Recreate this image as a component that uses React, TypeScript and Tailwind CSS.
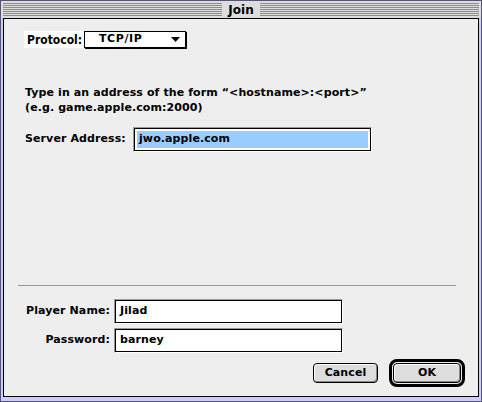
import React from 'react';

const font = "font-['DejaVu_Sans',Verdana,sans-serif]";
const txt = 'text-[11px] font-bold tracking-[0.1px] text-black';

function Stripes() {
  return (
    <div className="flex-1 flex flex-col gap-px">
      {[0, 1, 2, 3, 4, 5, 6].map((i) => (
        <div key={i} className="h-px bg-[#8c8c8c]" />
      ))}
    </div>
  );
}

function Field({ value, width, selected }: { value: string; width: string; selected?: boolean }) {
  return (
    <div className={`${width} border-t border-l border-[#999] border-b border-r border-b-white border-r-white`}>
      <div className="h-[23px] border border-black bg-white p-[2px] flex items-center">
        <div className={`h-[17px] w-full flex items-center pl-[2px] ${txt} ${selected ? 'bg-[#99ccff]' : ''}`}>
          {value}
        </div>
      </div>
    </div>
  );
}

function Button({ label, width }: { label: string; width: string }) {
  return (
    <div className={`${width} h-[20px] rounded-[4px] border border-black bg-[#dddddd] shadow-[inset_1px_1px_0_#fff,inset_-1px_-1px_0_#888] flex items-center justify-center ${txt}`}>
      {label}
    </div>
  );
}

export default function App() {
  return (
    <div className={`w-[482px] h-[402px] bg-[#ccccff] border border-[#555577] flex flex-col ${font}`}>
      {/* title bar */}
      <div className="h-[17px] flex items-center px-[2px] bg-[#dddddd]">
        <Stripes />
        <div className="px-[6px] text-[12px] font-bold text-black leading-none">Join</div>
        <Stripes />
      </div>

      <div className="flex-1 mx-[2px] mb-[4px] border border-black bg-[#eeeeee] flex flex-col">
        {/* protocol */}
        <div className="mt-[12px] ml-[20px] flex items-center">
          <div className="h-[17px] w-[60px] bg-white flex items-center pl-[3px] font-['DejaVu_Sans_Condensed','DejaVu_Sans',sans-serif] font-stretch-condensed text-[12px] font-bold text-black whitespace-nowrap">
            Protocol:
          </div>
          <div className={`h-[17px] w-[102px] border border-black bg-white shadow-[1px_1px_0_#000] flex items-center justify-between pl-[14px] pr-[5px] ${txt} tracking-[0.6px]`}>
            <span>TCP/IP</span>
            <svg width="9" height="5" viewBox="0 0 9 5">
              <path d="M0 0 H9 L4.5 5 Z" fill="#000" />
            </svg>
          </div>
        </div>

        {/* hint */}
        <div className={`mt-[37px] ml-[21px] leading-[15px] ${txt}`}>
          <div>Type in an address of the form “&lt;hostname&gt;:&lt;port&gt;”</div>
          <div>(e.g. game.apple.com:2000)</div>
        </div>

        {/* server */}
        <div className="mt-[12px] ml-[21px] flex items-center">
          <div className={`w-[108px] whitespace-nowrap ${txt}`}>Server Address:</div>
          <Field value="jwo.apple.com" width="w-[239px]" selected />
        </div>

        <div className="flex-1" />

        {/* separator */}
        <div className="mx-[14px] w-[438px] h-px bg-[#999]" />

        {/* player */}
        <div className="mt-[13px] flex items-center">
          <div className={`w-[110px] pr-[4px] text-right whitespace-nowrap ${txt}`}>Player Name:</div>
          <Field value="Jilad" width="w-[229px]" />
        </div>
        <div className="mt-[4px] flex items-center">
          <div className={`w-[110px] pr-[4px] text-right ${txt}`}>Password:</div>
          <Field value="barney" width="w-[229px]" />
        </div>

        {/* buttons */}
        <div className="mt-[6px] mb-[9px] mr-[13px] flex items-center justify-end gap-[11px]">
          <Button label="Cancel" width="w-[65px]" />
          <div className="rounded-[8px] border-[3px] border-black p-px">
            <Button label="OK" width="w-[68px]" />
          </div>
        </div>
      </div>
    </div>
  );
}
